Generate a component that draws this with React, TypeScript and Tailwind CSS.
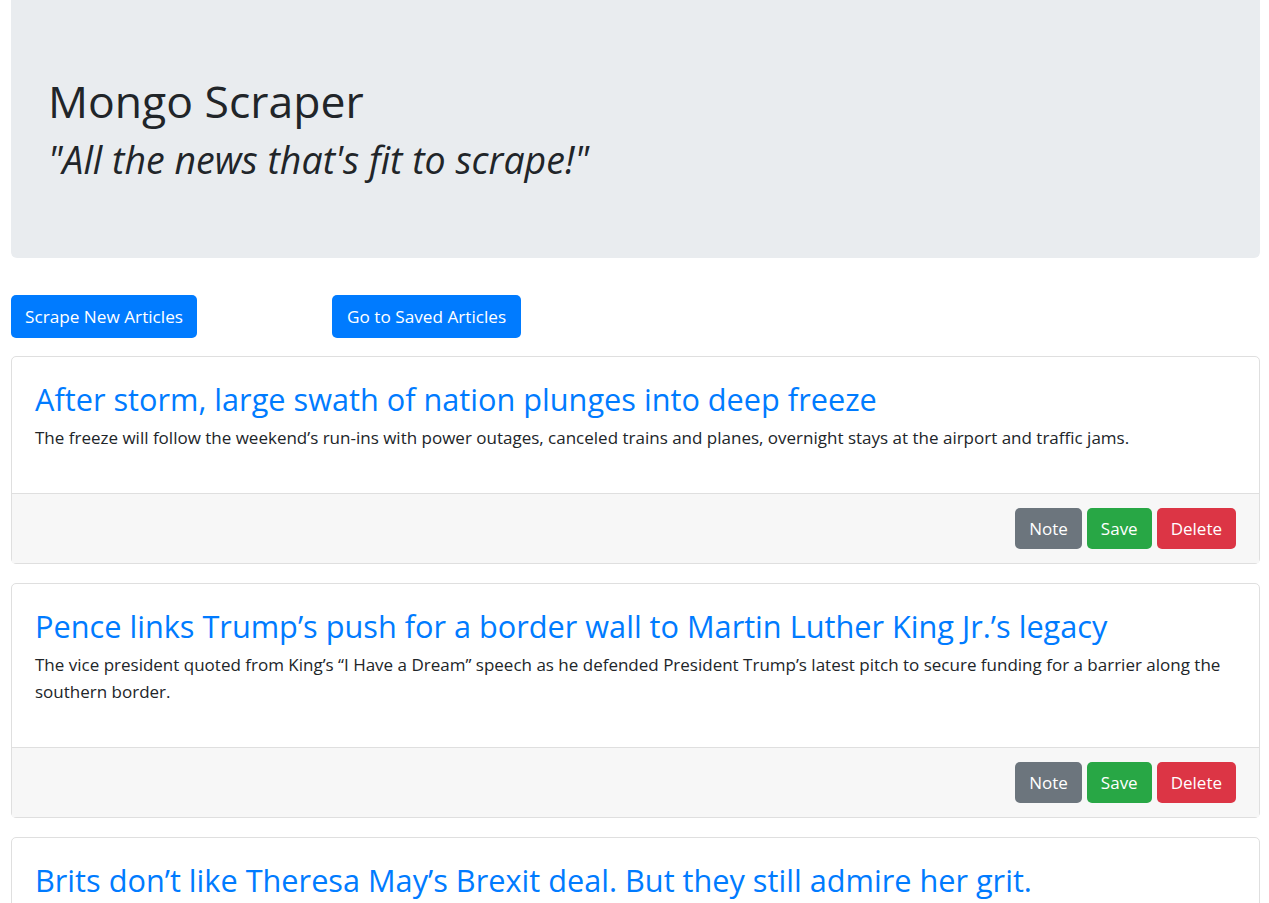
const articles = [
  {
    title: 'After storm, large swath of nation plunges into deep freeze',
    summary:
      'The freeze will follow the weekend’s run-ins with power outages, canceled trains and planes, overnight stays at the airport and traffic jams.',
  },
  {
    title: 'Pence links Trump’s push for a border wall to Martin Luther King Jr.’s legacy',
    summary:
      'The vice president quoted from King’s “I Have a Dream” speech as he defended President Trump’s latest pitch to secure funding for a barrier along the southern border.',
  },
  {
    title: 'Brits don’t like Theresa May’s Brexit deal. But they still admire her grit.',
    summary:
      'Most voters want a new referendum or a different deal, but many say the prime minister has handled a hard job about as well as anyone could.',
  },
];

function ArticleCard({ title, summary }: { title: string; summary: string }) {
  return (
    <div className="mb-[19px] rounded-[5px] border border-[#dfdfdf] bg-white">
      <div className="px-[23px] pt-[23px] pb-[24px]">
        <h3 className="mb-[6px] text-[30.7px] leading-[38px] text-[#007bff]">{title}</h3>
        <p className="mb-[18px] text-[17px] leading-[27px] text-[#212529]">{summary}</p>
      </div>
      <div className="flex justify-end gap-[5px] border-t border-[#dfdfdf] bg-[#f7f7f7] px-[23px] py-[14px]">
        <button className="h-[41px] rounded-[5px] bg-[#6c757d] px-[14px] text-[17px] text-white">
          Note
        </button>
        <button className="h-[41px] rounded-[5px] bg-[#28a745] px-[14px] text-[17px] text-white">
          Save
        </button>
        <button className="h-[41px] rounded-[5px] bg-[#dc3545] px-[14px] text-[17px] text-white">
          Delete
        </button>
      </div>
    </div>
  );
}

export default function App() {
  return (
    <div className="min-h-screen bg-white pl-[11px] pr-[9px] font-['Open_Sans',sans-serif] text-[#212529]">
      <div className="mb-[37px] rounded-b-[6px] bg-[#e9ecef] px-[37px] pt-[74px] pb-[76px]">
        <h1 className="mb-[9px] text-[44.5px] leading-[54px]">Mongo Scraper</h1>
        <h2 className="text-[37.5px] leading-[45px] italic">"All the news that's fit to scrape!"</h2>
      </div>

      <div className="mb-[18px] flex gap-[135px]">
        <button className="h-[43px] rounded-[5px] bg-[#007bff] px-[14px] text-[17.2px] text-white">
          Scrape New Articles
        </button>
        <button className="h-[43px] rounded-[5px] bg-[#007bff] px-[15px] text-[17.2px] text-white">
          Go to Saved Articles
        </button>
      </div>

      {articles.map((a) => (
        <ArticleCard key={a.title} title={a.title} summary={a.summary} />
      ))}
    </div>
  );
}
